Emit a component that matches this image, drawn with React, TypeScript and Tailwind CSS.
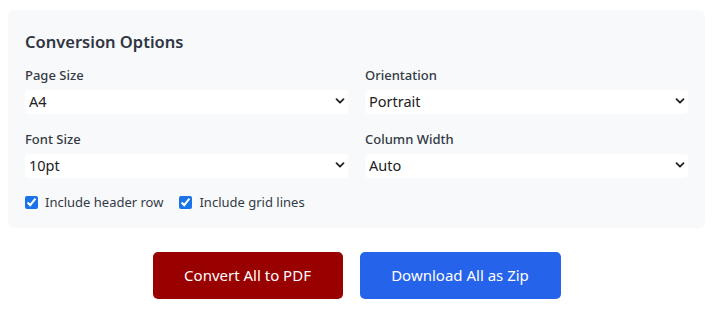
const fieldRows = [
  [
    { label: "Page Size", value: "A4", options: ["A4", "Letter", "Legal", "A3"] },
    { label: "Orientation", value: "Portrait", options: ["Portrait", "Landscape"] },
  ],
  [
    { label: "Font Size", value: "10pt", options: ["8pt", "9pt", "10pt", "11pt", "12pt"] },
    { label: "Column Width", value: "Auto", options: ["Auto", "Fixed"] },
  ],
];

function Chevron() {
  return (
    <svg
      className="pointer-events-none absolute right-[3px] top-1/2 -translate-y-1/2"
      width="10"
      height="10"
      viewBox="0 0 10 10"
      fill="none"
    >
      <path d="M1.5 3.2 5 6.7l3.5-3.5" stroke="#222" strokeWidth="1.8" strokeLinecap="round" strokeLinejoin="round" />
    </svg>
  );
}

export default function App() {
  return (
    <div
      className="w-[728px] h-[315px] bg-white text-[#333] pt-[10px] pl-[8px]"
      style={{ fontFamily: '"Noto Sans", "Open Sans", sans-serif' }}
    >
      <div className="w-[697px] h-[218px] bg-[#f8f9fb] rounded-md px-[17px] pt-[20px]">
        <h2 className="text-[16.5px] font-semibold leading-6 text-[#2f3542] mb-[13px]">Conversion Options</h2>
        <div className="flex flex-col gap-[17px]">
          {fieldRows.map((row, i) => (
            <div key={i} className="grid grid-cols-2 gap-x-[17px]">
              {row.map((f) => (
                <label key={f.label} className="flex flex-col">
                  <span className="text-[13px] font-medium leading-[17px] text-[#333a45] mb-[5px]">{f.label}</span>
                  <div className="relative">
                    <select
                      defaultValue={f.value}
                      className="appearance-none w-full h-[24px] bg-white rounded-[4px] pl-[4px] text-[14.5px] text-[#222] outline-none"
                    >
                      {f.options.map((o) => (
                        <option key={o}>{o}</option>
                      ))}
                    </select>
                    <Chevron />
                  </div>
                </label>
              ))}
            </div>
          ))}
        </div>
        <div className="flex items-center gap-[16px] mt-[15px] text-[13px] text-[#333a45]">
          <label className="flex items-center gap-[7px]">
            <input type="checkbox" defaultChecked className="w-[13px] h-[13px] accent-[#1a73e8]" />
            Include header row
          </label>
          <label className="flex items-center gap-[7px]">
            <input type="checkbox" defaultChecked className="w-[13px] h-[13px] accent-[#1a73e8]" />
            Include grid lines
          </label>
        </div>
      </div>
      <div className="w-[697px] flex justify-center gap-[17px] mt-[24px]">
        <button className="w-[190px] h-[47px] rounded-[5px] bg-[#990000] text-white text-[15px]">
          Convert All to PDF
        </button>
        <button className="w-[201px] h-[47px] rounded-[5px] bg-[#2563eb] text-white text-[15px]">
          Download All as Zip
        </button>
      </div>
    </div>
  );
}
